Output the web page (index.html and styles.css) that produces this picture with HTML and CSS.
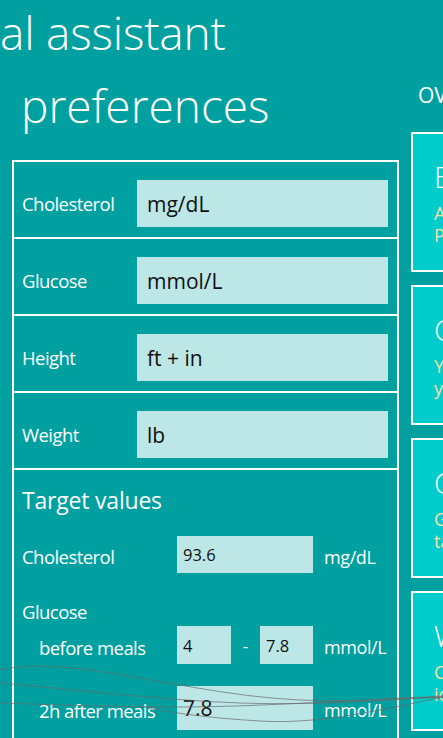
FILE: index.html
```html
<!DOCTYPE html>
<html lang="en">
<head>
<meta charset="utf-8">
<title>Personal assistant - preferences</title>
<link rel="stylesheet" href="styles.css">
</head>
<body>
<header class="app-header">
  <h1 class="app-title">al assistant</h1>
</header>
<main class="hub">
  <section class="prefs">
    <h2 class="section-title">preferences</h2>
    <div class="panel">
      <div class="unit-row">
        <span class="unit-label">Cholesterol</span>
        <input class="unit-field" value="mg/dL">
      </div>
      <div class="unit-row">
        <span class="unit-label">Glucose</span>
        <input class="unit-field" value="mmol/L">
      </div>
      <div class="unit-row">
        <span class="unit-label">Height</span>
        <input class="unit-field" value="ft + in">
      </div>
      <div class="unit-row">
        <span class="unit-label">Weight</span>
        <input class="unit-field" value="lb">
      </div>
      <div class="targets">
        <h3 class="targets-title">Target values</h3>
        <div class="target-row row-chol">
          <span class="t-label">Cholesterol</span>
          <input class="t-field t-wide" value="93.6">
          <span class="t-unit">mg/dL</span>
        </div>
        <div class="t-group">Glucose</div>
        <div class="target-row row-before">
          <span class="t-label t-sub">before meals</span>
          <div class="range">
            <input class="t-field t-short" value="4">
            <span class="dash">-</span>
            <input class="t-field t-short" value="7.8">
          </div>
          <span class="t-unit">mmol/L</span>
        </div>
        <div class="target-row row-after">
          <span class="t-label t-sub">2h after meals</span>
          <input class="t-field t-wide t-big" value="7.8">
          <span class="t-unit">mmol/L</span>
        </div>
      </div>
    </div>
  </section>
  <section class="overview">
    <h2 class="overview-title">OVERVIEW</h2>
    <div class="tile">
      <div class="tile-head">Exercise</div>
      <div class="tile-text">Add your daily<br>Physical activity</div>
    </div>
    <div class="tile">
      <div class="tile-head">Cholesterol</div>
      <div class="tile-text">Your latest reading<br>your target</div>
    </div>
    <div class="tile">
      <div class="tile-head">Glucose</div>
      <div class="tile-text">Glucose readings<br>taken today</div>
    </div>
    <div class="tile">
      <div class="tile-head">Weight</div>
      <div class="tile-text">Check your<br>ideal weight</div>
    </div>
  </section>
</main>
<svg class="ink" width="443" height="738" viewBox="0 0 443 738" aria-hidden="true">
  <path d="M0,670 C20,665 50,665 90,670 C160,680 230,697 300,700 C350,702 380,699 443,696"/>
  <path d="M0,683 C80,690 160,700 240,703 C300,705 360,702 443,697"/>
  <path d="M0,703 C60,705 120,707 180,707 C250,707 330,701 443,697"/>
  <path d="M140,706 C170,713 210,718 260,721 C310,724 360,715 443,697"/>
</svg>
</body>
</html>
```

FILE: styles.css
```css
html, body {
  margin: 0;
  padding: 0;
}

body {
  position: relative;
  width: 443px;
  height: 738px;
  overflow: hidden;
  background: #00a0a0;
  color: #ffffff;
  font-family: "Open Sans", "Noto Sans", sans-serif;
}

.app-header {
  padding-top: 4px;
}

.app-title {
  margin: 0;
  font-size: 46px;
  line-height: 56px;
  font-weight: 300;
  white-space: nowrap;
  letter-spacing: -0.2px;
}

.hub {
  display: flex;
  align-items: flex-start;
}

.prefs {
  flex: none;
  width: 387px;
  margin-left: 12px;
}

.section-title {
  margin: 19px 0 29px 9px;
  font-size: 46px;
  line-height: 52px;
  font-weight: 300;
  white-space: nowrap;
}

.panel {
  box-sizing: border-box;
  width: 387px;
  border: 2px solid #ffffff;
  border-bottom: none;
  height: 600px;
}

.unit-row {
  display: flex;
  align-items: center;
  padding: 18px 9px 10px 8px;
  border-bottom: 2px solid #ffffff;
}

.unit-label {
  flex: 0 0 115px;
  font-size: 18.5px;
  letter-spacing: -0.55px;
}

.unit-field {
  flex: 1;
  min-width: 0;
  height: 47px;
  box-sizing: border-box;
  border: 0;
  padding: 0 10px;
  background: #bde6e6;
  color: #111111;
  font-family: "Open Sans", "Noto Sans", sans-serif;
  font-size: 21px;
  outline: none;
}

.targets {
  padding: 15px 0 0 8px;
}

.targets-title {
  margin: 0 0 21px 0;
  font-size: 23px;
  line-height: 30px;
  font-weight: 400;
  letter-spacing: -0.2px;
}

.target-row {
  display: flex;
  align-items: center;
}

.t-label {
  flex: 0 0 155px;
  box-sizing: border-box;
  padding-top: 4px;
  font-size: 18.5px;
  letter-spacing: -0.55px;
}

.t-sub {
  padding-left: 17px;
}

.t-field {
  box-sizing: border-box;
  border: 0;
  padding: 0 6px;
  background: #bde6e6;
  color: #111111;
  font-family: "Open Sans", "Noto Sans", sans-serif;
  font-size: 16.5px;
  outline: none;
}

.t-wide {
  width: 136px;
}

.row-chol .t-field {
  height: 37px;
}

.t-group {
  margin-top: 27px;
  font-size: 18.5px;
  letter-spacing: -0.55px;
  line-height: 24px;
}

.row-before {
  margin-top: 2px;
}

.range {
  display: flex;
  align-items: center;
  justify-content: space-between;
  width: 136px;
}

.t-short {
  width: 54px;
  height: 38px;
}

.t-short + .dash + .t-short {
  width: 53px;
}

.dash {
  font-size: 17px;
}

.row-after {
  margin-top: 22px;
}

.t-big {
  height: 44px;
  font-size: 21px;
}

.t-unit {
  margin-left: 11px;
  padding-top: 4px;
  font-size: 18px;
  letter-spacing: -0.4px;
  white-space: nowrap;
}

.overview {
  flex: none;
  width: 300px;
  margin-left: 12px;
}

.overview-title {
  margin: 21px 0 23px 7px;
  font-size: 21px;
  line-height: 28px;
  font-weight: 400;
}

.tile {
  box-sizing: border-box;
  height: 140px;
  margin-bottom: 13px;
  padding: 25px 0 0 21px;
  border: 2px solid #ffffff;
  background: #00cccc;
}

.tile-head {
  font-size: 29px;
  line-height: 36px;
  font-weight: 300;
}

.tile-text {
  margin-top: 7px;
  font-size: 18px;
  line-height: 22px;
  color: #f3e3a6;
}

.ink {
  position: absolute;
  top: 0;
  left: 0;
  pointer-events: none;
}

.ink path {
  fill: none;
  stroke: rgba(105, 105, 105, 0.7);
  stroke-width: 1;
}
```
